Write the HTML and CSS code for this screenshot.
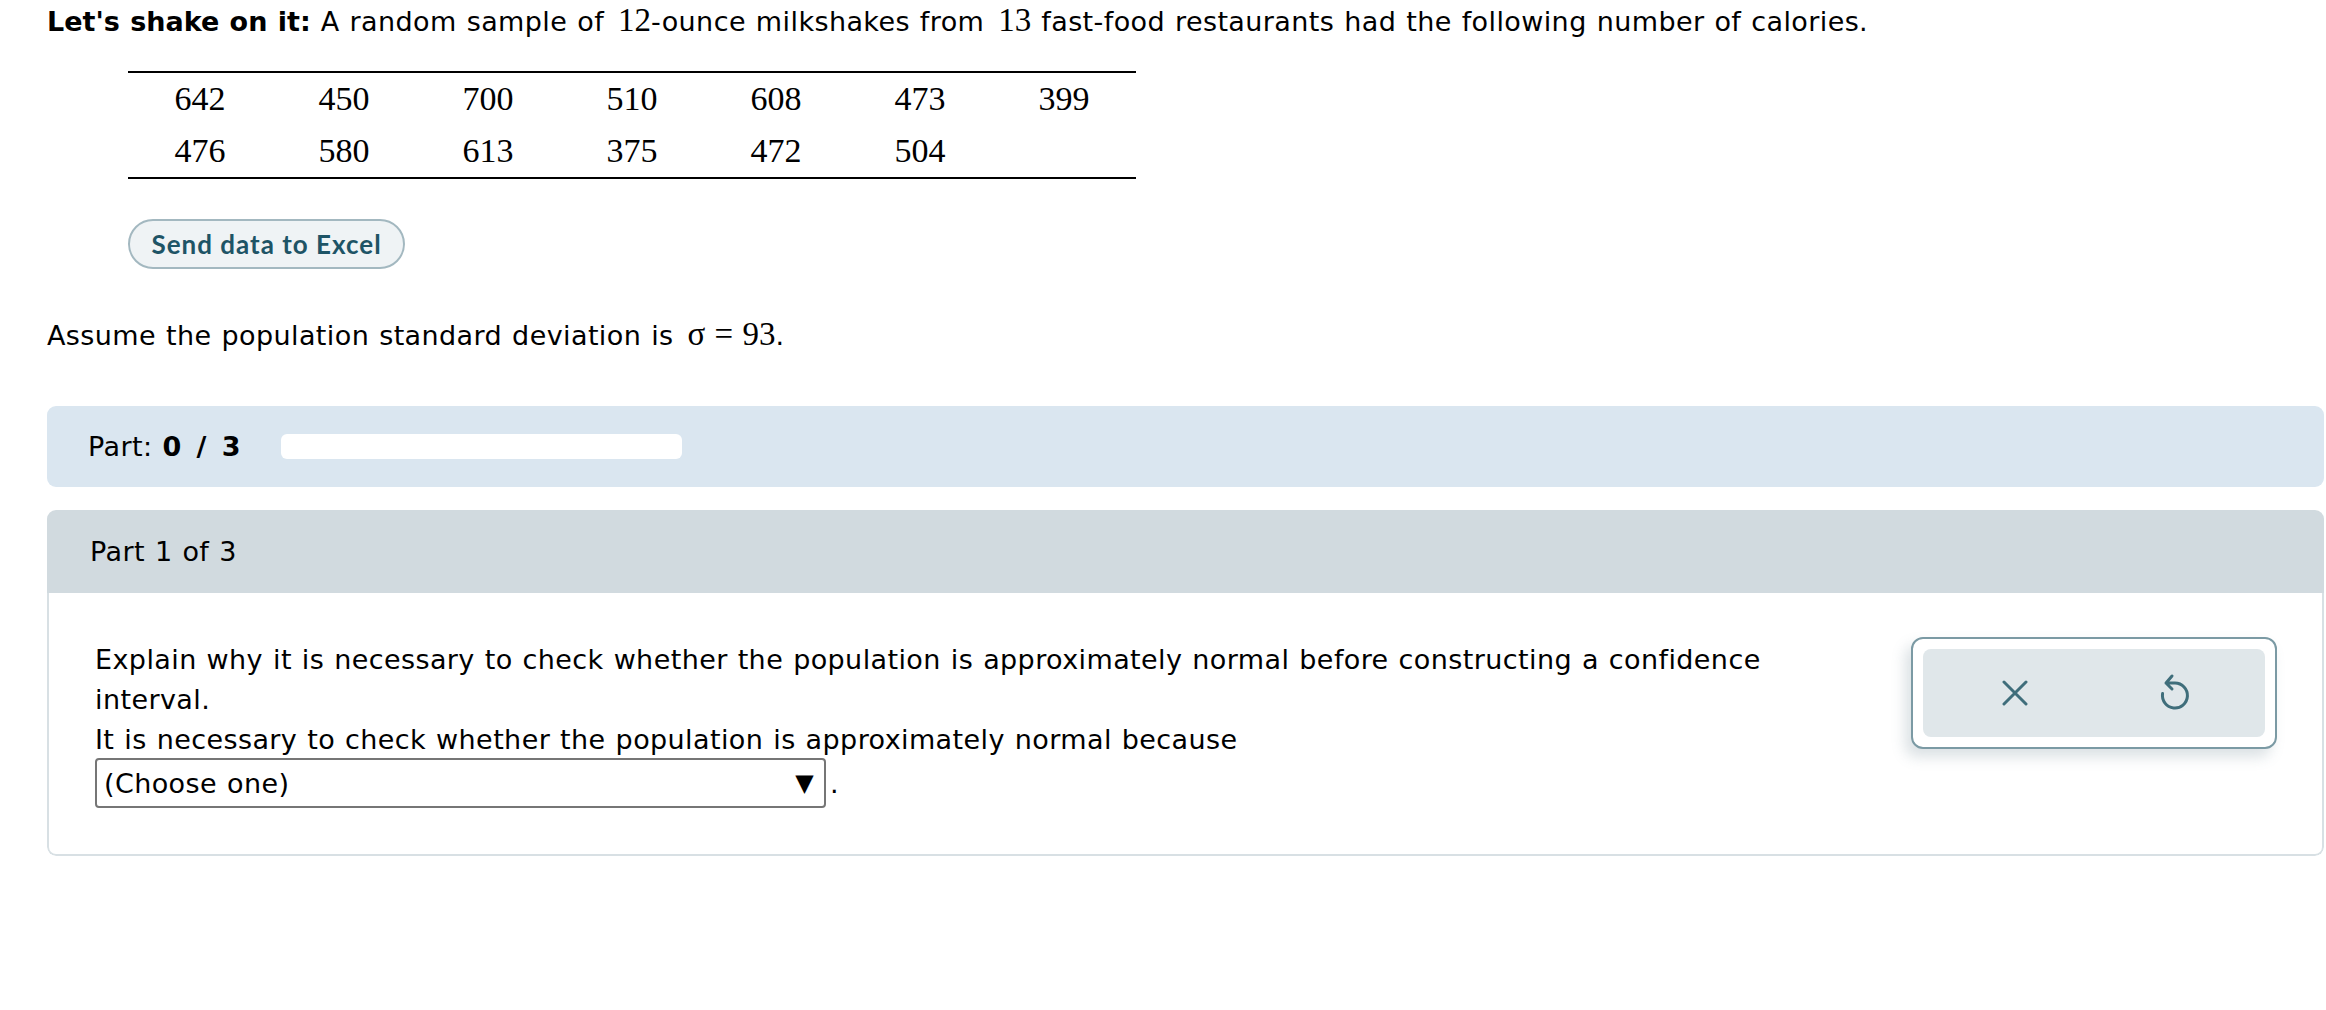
FILE: index.html
```html
<!DOCTYPE html>
<html>
<head>
<meta charset="utf-8">
<link rel="stylesheet" href="styles.css">
</head>
<body>
<div class="page">
  <p class="intro"><b>Let's shake on it:</b> A random sample of <span class="m">12</span>-ounce milkshakes from <span class="m">13</span> fast-food restaurants had the following number of calories.</p>
  <table class="data">
    <tr><td>642</td><td>450</td><td>700</td><td>510</td><td>608</td><td>473</td><td>399</td></tr>
    <tr><td>476</td><td>580</td><td>613</td><td>375</td><td>472</td><td>504</td><td></td></tr>
  </table>
  <div class="excel-row"><button class="excel">Send data to Excel</button></div>
  <p class="assume">Assume the population standard deviation is <span class="m">σ = 93</span>.</p>
  <div class="progress">
    <span class="plabel">Part: <b>0 / 3</b></span>
    <span class="track"></span>
  </div>
  <div class="card">
    <div class="card-head">Part 1 of 3</div>
    <div class="card-body">
      <div class="question">
        <p class="q">Explain why it is necessary to check whether the population is approximately normal before constructing a confidence interval.</p>
        <p class="q">It is necessary to check whether the population is approximately normal because</p>
        <div class="answer"><span class="select"><span>(Choose one)</span><span class="arrow">▼</span></span><span class="dot">.</span></div>
      </div>
      <div class="actions">
        <div class="inner">
          <svg class="icon-x" width="26" height="26" viewBox="0 0 26 26"><path d="M2 2 L24 24 M24 2 L2 24" fill="none" stroke="#3f6e7b" stroke-width="3" stroke-linecap="round"/></svg>
          <svg class="icon-undo" width="36" height="42" viewBox="0 0 36 42"><path d="M15 4 L9 11 L15 17 M9 11 H18 A12.5 12.5 0 1 1 5.6 21.5" fill="none" stroke="#3f6e7b" stroke-width="3" stroke-linecap="round" stroke-linejoin="round"/></svg>
        </div>
      </div>
    </div>
  </div>
</div>
</body>
</html>
```

FILE: styles.css
```css
html, body {
  margin: 0;
  padding: 0;
  background: #ffffff;
}
body {
  font-family: "DejaVu Sans", Verdana, sans-serif;
  font-size: 27px;
  letter-spacing: 0.4px;
  word-spacing: 1px;
  color: #000000;
}
b {
  letter-spacing: 0;
}
.page {
  padding-left: 47px;
  padding-right: 2px;
}
.m {
  font-family: "Liberation Serif", "Times New Roman", serif;
  font-size: 33px;
  line-height: 1;
  letter-spacing: 0;
  margin-left: 4px;
}
.intro {
  margin: 0;
  padding-top: 4px;
  line-height: 36px;
}
.data {
  margin: 31px 0 0 81px;
  border-collapse: collapse;
  border-top: 2px solid #000;
  border-bottom: 2px solid #000;
  font-family: "Liberation Serif", "Times New Roman", serif;
  font-size: 34px;
  letter-spacing: 0;
}
.data td {
  width: 144px;
  height: 52px;
  padding: 0;
  text-align: center;
  vertical-align: middle;
}
.excel-row {
  margin: 40px 0 0 81px;
}
.excel {
  height: 50px;
  width: 277px;
  border: 2px solid #a3b8c0;
  border-radius: 25px;
  background: #eff3f5;
  color: #1e5466;
  font-family: Lato, "Open Sans", sans-serif;
  font-weight: 700;
  font-size: 26px;
  letter-spacing: 1px;
  word-spacing: 0;
  padding: 0;
}
.assume {
  margin: 49px 0 0 0;
  line-height: 36px;
}
.progress {
  margin-top: 52px;
  height: 81px;
  background: #dae6f0;
  border-radius: 9px;
  display: flex;
  align-items: center;
  padding-left: 41px;
  gap: 40px;
}
.plabel b {
  font-weight: bold;
  word-spacing: 6px;
}
.track {
  width: 401px;
  height: 25px;
  background: #ffffff;
  border-radius: 6px;
}
.card {
  margin-top: 23px;
  border-radius: 9px;
  overflow: hidden;
}
.card-head {
  background: #d1dadf;
  height: 83px;
  display: flex;
  align-items: center;
  padding-left: 43px;
}
.card-body {
  border: 2px solid #d8e0e4;
  border-top: none;
  border-radius: 0 0 9px 9px;
  display: flex;
  justify-content: space-between;
  align-items: flex-start;
  padding: 47px 45px 46px 46px;
}
.question {
  width: 1720px;
}
.q {
  margin: 0;
  line-height: 40px;
}
.answer {
  display: flex;
  align-items: center;
  margin-top: -2px;
}
.select {
  display: flex;
  justify-content: space-between;
  align-items: center;
  box-sizing: border-box;
  width: 731px;
  height: 50px;
  border: 2px solid #767676;
  border-radius: 4px;
  padding: 0 10px 0 7px;
}
.arrow {
  font-size: 24px;
}
.dot {
  margin-left: 4px;
}
.actions {
  margin-top: -3px;
  box-sizing: border-box;
  width: 366px;
  height: 112px;
  border: 2px solid #7b9aa4;
  border-radius: 12px;
  background: #ffffff;
  padding: 10px;
  box-shadow: -6px 8px 14px rgba(90, 120, 130, 0.22);
}
.inner {
  height: 100%;
  background: #e0e7ea;
  border-radius: 8px;
  display: flex;
  align-items: center;
  justify-content: space-around;
}
.icon-x {
  margin-left: 14px;
}
.icon-undo {
  margin-right: 8px;
}
```
